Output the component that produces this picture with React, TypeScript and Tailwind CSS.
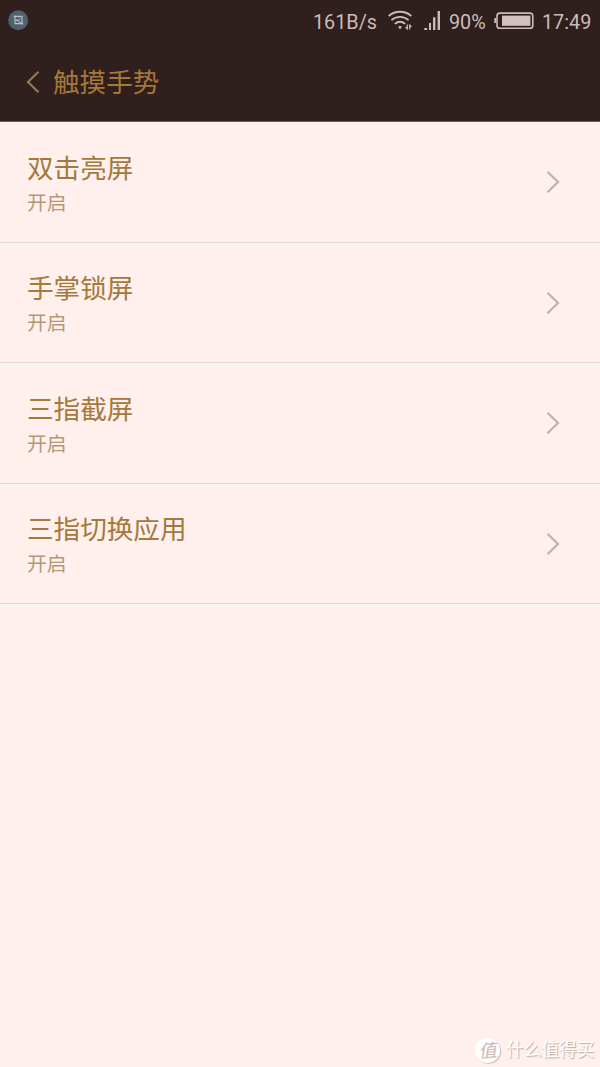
import React from 'react';

interface GestureItem {
  title: string;
  status: string;
}

const gestures: GestureItem[] = [
  { title: '双击亮屏', status: '开启' },
  { title: '手掌锁屏', status: '开启' },
  { title: '三指截屏', status: '开启' },
  { title: '三指切换应用', status: '开启' },
];

const ScreenshotIcon = () => (
  <svg width="22" height="22" viewBox="0 0 22 22" fill="none">
    <circle cx="11.2" cy="11.2" r="10" fill="#4e6270" />
    <path d="M6.6 7.4H15V14M8 6.6V14.6H16.2" stroke="#c3bfc2" strokeWidth="1.1" />
    <path d="M8.5 12.2L10.2 10.8L12.2 12.6L15.6 15.4" stroke="#c3bfc2" strokeWidth="1.1" />
    <circle cx="12.6" cy="9.9" r="0.7" fill="#c3bfc2" />
  </svg>
);

const WifiIcon = () => (
  <svg width="26" height="22" viewBox="0 0 26 22" fill="none" stroke="#cdbbb9" strokeWidth="1.8">
    <path d="M0.7 6C7.2 0.3 16.8 0.3 23.3 6" />
    <path d="M3.4 10.1C8.4 5.7 15.6 5.7 20.6 10.1" />
    <path d="M6.8 13.9C10 11.2 14 11.2 17.2 13.9" />
    <path d="M10 16.6Q12 15.2 14 16.6L12 19.5Z" fill="#cdbbb9" stroke="none" />
    <path d="M19.6 14V20L16.8 17H19.6M21.6 20V14L24 17H21.6" fill="#cdbbb9" stroke="none" />
    <path d="M19.3 14.5V19.5M21.7 14.5V19.5" strokeWidth="1.2" />
  </svg>
);

const SignalIcon = () => (
  <svg width="17" height="20" viewBox="0 0 17 20" fill="#cdbbb9">
    <rect x="0.3" y="17" width="2.8" height="2" />
    <rect x="5" y="12" width="2" height="7" />
    <rect x="9" y="6.3" width="2.4" height="12.7" />
    <rect x="13.6" y="0" width="2.4" height="19" />
  </svg>
);

const BatteryIcon = () => (
  <svg width="40" height="18" viewBox="0 0 40 18" fill="none">
    <rect x="0.3" y="6" width="1.8" height="5" fill="#cdbbb9" />
    <rect x="3" y="1.1" width="35.8" height="15.1" rx="2.8" stroke="#cdbbb9" strokeWidth="1.6" />
    <rect x="8" y="3.6" width="28.4" height="10.2" fill="#d2c1bf" />
  </svg>
);

const StatusBar = () => (
  <div className="flex h-[42px] items-start pl-[7px] text-[19.8px] leading-[24px] text-[#cdbbb9]">
    <div className="mt-[9px]">
      <ScreenshotIcon />
    </div>
    <span className="mt-[11px] ml-[284px] w-[75px] whitespace-nowrap">161B/s</span>
    <div className="mt-[10px] w-[36px]">
      <WifiIcon />
    </div>
    <div className="mt-[11px] w-[25px]">
      <SignalIcon />
    </div>
    <span className="mt-[11px] w-[45px]">90%</span>
    <div className="mt-[12px] w-[48px]">
      <BatteryIcon />
    </div>
    <span className="mt-[11px]">17:49</span>
  </div>
);

const Header = () => (
  <header className="h-[122px] border-b border-[#6b5855] bg-[#2f1f1d]">
    <StatusBar />
    <div className="flex h-[79px] items-center pl-[26px]">
      <svg width="14" height="24" viewBox="0 0 14 24" fill="none">
        <path d="M12.5 1.7L2 12L12.5 22.3" stroke="#96745a" strokeWidth="2.3" />
      </svg>
      <h1 className="mt-[3px] ml-[13px] text-[26.6px] leading-[38px] text-[#a5773a]">触摸手势</h1>
    </div>
  </header>
);

const GestureRow: React.FC<{ item: GestureItem }> = ({ item }) => (
  <li className="flex h-[120.5px] items-center justify-between border-b border-[#e5d6d3] pr-[40px] pl-[27px]">
    <div className="pt-[6px]">
      <div className="text-[26.6px] leading-[38px] text-[#a5783c]">{item.title}</div>
      <div className="text-[19.8px] leading-[32px] text-[#b5977a]">{item.status}</div>
    </div>
    <svg className="mt-px" width="14" height="24" viewBox="0 0 14 24" fill="none">
      <path d="M1.5 1.7L12 12L1.5 22.3" stroke="#c4b1ae" strokeWidth="2.3" />
    </svg>
  </li>
);

const Watermark = () => (
  <footer className="mt-auto flex items-center gap-[6px] pr-[4px] pb-[4px] pl-[475px]">
    <div className="flex h-[25px] w-[25px] shrink-0 -rotate-6 items-center justify-center rounded-full bg-white text-[18px] leading-none text-[#c9b9b6] italic shadow-[1px_1px_1px_#cdbfbc]">
      值
    </div>
    <span className="text-[17.7px] leading-[26px] whitespace-nowrap text-white [text-shadow:1px_1px_1px_#b9aaa7]">
      什么值得买
    </span>
  </footer>
);

const App: React.FC = () => {
  return (
    <div
      lang="zh-CN"
      className="flex h-[1067px] w-[600px] flex-col overflow-hidden bg-[#fff0ed] font-[Roboto,'Noto_Sans_CJK_SC',sans-serif]"
    >
      <Header />
      <ul>
        {gestures.map((item) => (
          <GestureRow key={item.title} item={item} />
        ))}
      </ul>
      <Watermark />
    </div>
  );
};

export default App;
